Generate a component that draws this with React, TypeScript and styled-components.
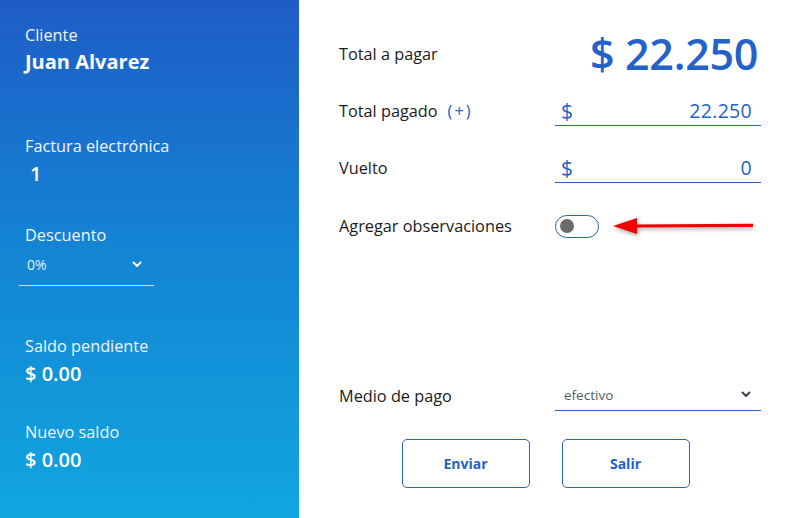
import React from "react";
import styled, { createGlobalStyle } from "styled-components";

const BLUE = "#2461c8";
const FONT = `"Open Sans", "Noto Sans", Arial, sans-serif`;

const Global = createGlobalStyle`
  html, body { margin: 0; padding: 0; background: #fff; }
  body { font-family: ${FONT}; }
  * { box-sizing: border-box; }
`;

const Page = styled.div`
  display: flex;
  width: 800px;
  height: 518px;
  overflow: hidden;
`;

const Side = styled.aside`
  width: 299px;
  flex: none;
  background: linear-gradient(180deg, #1f5cc6 0%, #1482d4 45%, #11a6df 100%);
  color: #fff;
  padding: 24px 0 0 25px;
  display: flex;
  flex-direction: column;
`;

const Group = styled.div<{ $mt?: number }>`
  display: flex;
  flex-direction: column;
  margin-top: ${(p) => p.$mt ?? 0}px;
`;

const SideLabel = styled.div`
  font-size: 16.3px;
  line-height: 22px;
  color: #f2f6ff;
`;

const SideValue = styled.div<{ $bold?: boolean; $indent?: number }>`
  font-size: 20px;
  line-height: 28px;
  font-weight: ${(p) => (p.$bold ? 700 : 600)};
  padding-left: ${(p) => p.$indent ?? 0}px;
  margin-top: ${(p) => (p.$bold ? 2 : 3)}px;
`;

const SideSelect = styled.div`
  width: 135px;
  margin-left: -6px;
  margin-top: 6px;
  height: 34px;
  padding: 0 12px 8px 8px;
  border-bottom: 1.5px solid #d9dde6;
  display: flex;
  align-items: center;
  justify-content: space-between;
  font-size: 14px;
  color: #e6eefc;
`;

const Main = styled.main`
  flex: 1;
  padding: 29px 39px 0 40px;
  display: flex;
  flex-direction: column;
`;

const Row = styled.div<{ $h: number; $mt?: number }>`
  display: grid;
  grid-template-columns: 216px 1fr;
  align-items: center;
  height: ${(p) => p.$h}px;
  margin-top: ${(p) => p.$mt ?? 0}px;
`;

const Label = styled.div`
  font-size: 16.3px;
  line-height: 22px;
  color: #1b1b1b;
  display: flex;
  align-items: center;
  gap: 10px;
`;

const Plus = styled.span`
  color: ${BLUE};
  letter-spacing: 2px;
`;

const Total = styled.div`
  justify-self: end;
  font-size: 43px;
  line-height: 50px;
  font-weight: 600;
  color: ${BLUE};
  letter-spacing: -0.3px;
  margin-right: 3px;
`;

const Field = styled.div`
  height: 30px;
  border-bottom: 1.5px solid ${BLUE};
  display: flex;
  align-items: center;
  justify-content: space-between;
  padding: 0 9px 0 6px;
  color: ${BLUE};
`;

const Dollar = styled.span`
  font-size: 21px;
  line-height: 28px;
  font-weight: 500;
`;

const Amount = styled.span`
  font-size: 19.5px;
  line-height: 28px;
  letter-spacing: 0.3px;
`;

const ToggleWrap = styled.div`
  display: flex;
  align-items: center;
  gap: 12px;
`;

const Toggle = styled.div`
  width: 44px;
  height: 23px;
  border: 1.5px solid ${BLUE};
  border-radius: 12px;
  display: flex;
  align-items: center;
  padding-left: 4px;
  background: #fff;
`;

const Knob = styled.span`
  width: 14px;
  height: 14px;
  border-radius: 50%;
  background: #6b6b6b;
`;

const Select = styled.div`
  height: 30px;
  border-bottom: 1.5px solid ${BLUE};
  display: flex;
  align-items: center;
  justify-content: space-between;
  padding: 0 10px 2px 9px;
  font-size: 13.5px;
  color: #555a62;
`;

const Buttons = styled.div`
  display: flex;
  justify-content: center;
  gap: 32px;
  margin-top: 23px;
  padding-right: 9px;
`;

const Button = styled.button`
  width: 128px;
  height: 49px;
  border: 1px solid ${BLUE};
  border-radius: 5px;
  background: #fff;
  color: ${BLUE};
  font-family: ${FONT};
  font-weight: 700;
  font-size: 14px;
  cursor: pointer;
`;

const Chevron = ({ color }: { color: string }) => (
  <svg width="10" height="7" viewBox="0 0 10 7">
    <path d="M1.5 1.5 L5 5 L8.5 1.5" fill="none" stroke={color} strokeWidth="2" strokeLinecap="round" strokeLinejoin="round" />
  </svg>
);

const Arrow = () => (
  <svg width="148" height="26" viewBox="0 0 148 26" style={{ filter: "drop-shadow(1px 2px 2px rgba(0,0,0,0.35))" }}>
    <path d="M22 11.5 L142 10.8 L142 14 L22 14.5 Z" fill="#f00000" />
    <path d="M2 13 L26 5 L26 21 Z" fill="#f00000" />
  </svg>
);

export default function App() {
  return (
    <>
      <Global />
      <Page>
        <Side>
          <Group>
            <SideLabel>Cliente</SideLabel>
            <SideValue $bold>Juan Alvarez</SideValue>
          </Group>
          <Group $mt={59}>
            <SideLabel>Factura electrónica</SideLabel>
            <SideValue $indent={5}>1</SideValue>
          </Group>
          <Group $mt={36}>
            <SideLabel>Descuento</SideLabel>
            <SideSelect>
              <span>0%</span>
              <Chevron color="#ffffff" />
            </SideSelect>
          </Group>
          <Group $mt={49}>
            <SideLabel>Saldo pendiente</SideLabel>
            <SideValue>$ 0.00</SideValue>
          </Group>
          <Group $mt={33}>
            <SideLabel>Nuevo saldo</SideLabel>
            <SideValue>$ 0.00</SideValue>
          </Group>
        </Side>
        <Main>
          <Row $h={50}>
            <Label>Total a pagar</Label>
            <Total>$ 22.250</Total>
          </Row>
          <Row $h={64}>
            <Label>
              Total pagado <Plus>(+)</Plus>
            </Label>
            <Field>
              <Dollar>$</Dollar>
              <Amount>22.250</Amount>
            </Field>
          </Row>
          <Row $h={50}>
            <Label>Vuelto</Label>
            <Field>
              <Dollar>$</Dollar>
              <Amount>0</Amount>
            </Field>
          </Row>
          <Row $h={66}>
            <Label>Agregar observaciones</Label>
            <ToggleWrap>
              <Toggle>
                <Knob />
              </Toggle>
              <Arrow />
            </ToggleWrap>
          </Row>
          <Row $h={40} $mt={117}>
            <Label>Medio de pago</Label>
            <Select>
              <span>efectivo</span>
              <Chevron color="#3a4250" />
            </Select>
          </Row>
          <Buttons>
            <Button>Enviar</Button>
            <Button>Salir</Button>
          </Buttons>
        </Main>
      </Page>
    </>
  );
}
